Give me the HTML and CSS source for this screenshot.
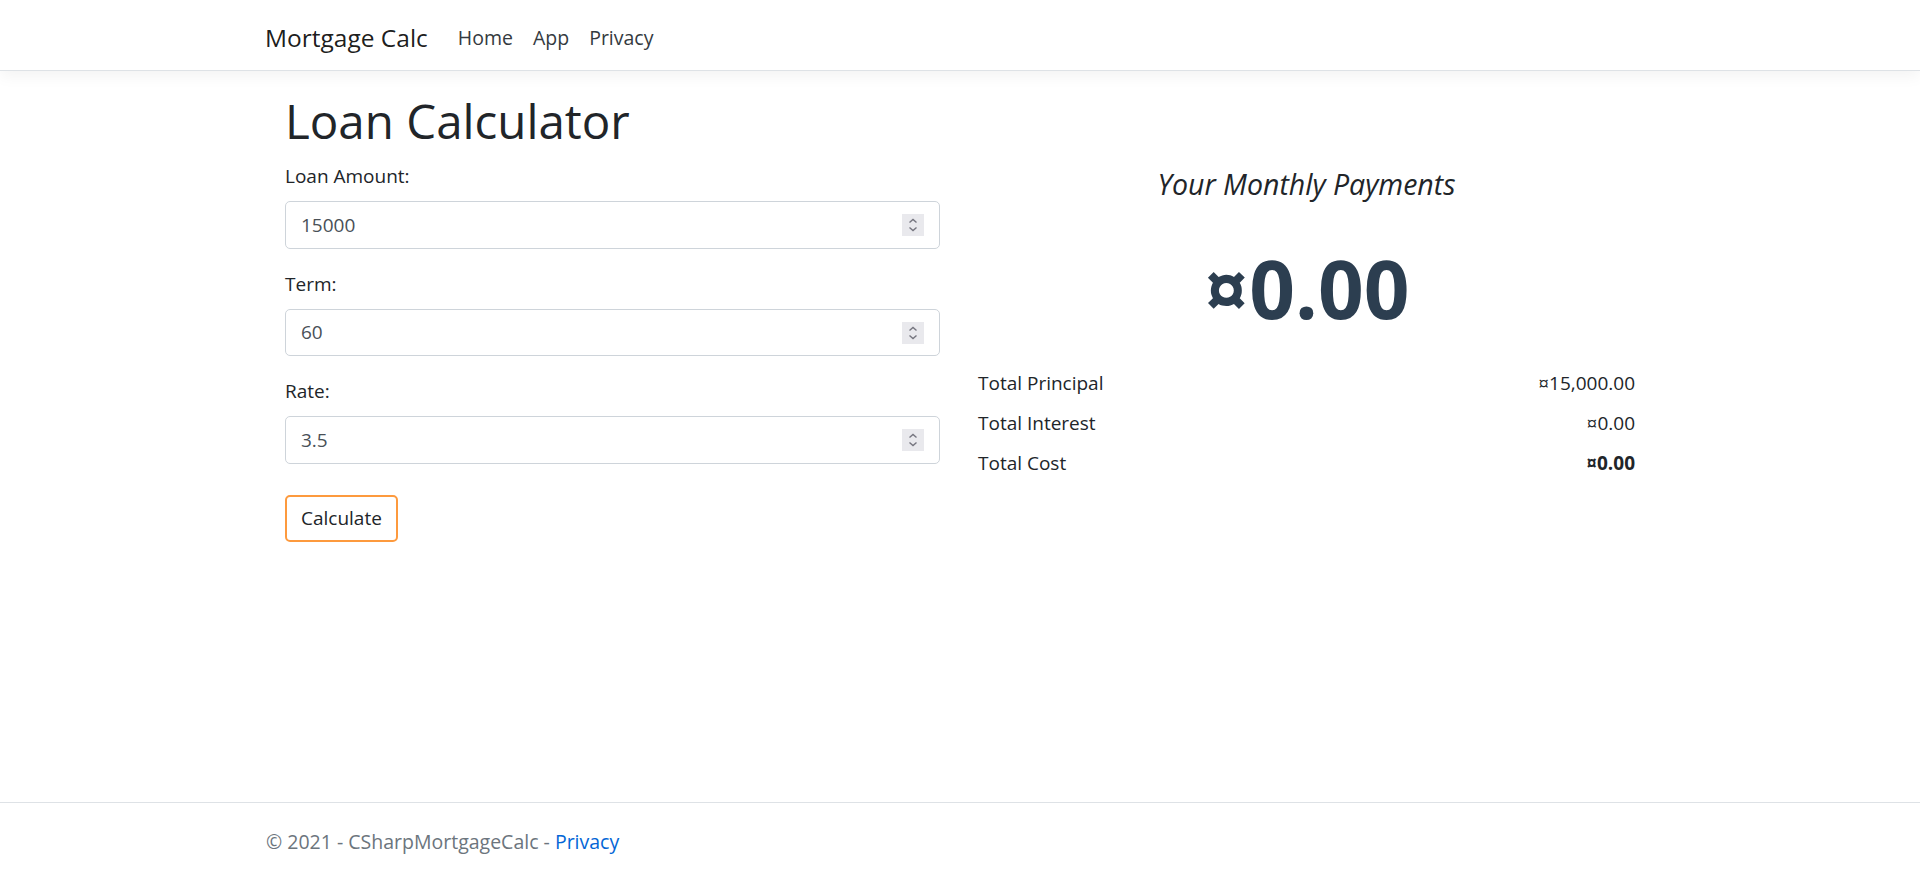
FILE: index.html
```html
<!DOCTYPE html>
<html lang="en">
<head>
<meta charset="utf-8">
<title>Loan Calculator - Mortgage Calc</title>
<link rel="stylesheet" href="styles.css">
</head>
<body>
<header>
  <nav class="navbar">
    <div class="container nav-inner">
      <a class="brand" href="#">Mortgage Calc</a>
      <ul class="nav-links">
        <li><a href="#">Home</a></li>
        <li><a href="#">App</a></li>
        <li><a href="#">Privacy</a></li>
      </ul>
    </div>
  </nav>
</header>
<div class="container">
  <main class="main">
    <h1 class="title">Loan Calculator</h1>
    <div class="calc-row">
      <form class="calc-form">
        <div class="field">
          <label for="amount">Loan Amount:</label>
          <div class="input-wrap">
            <input id="amount" class="control" type="number" value="15000">
            <span class="spin"><svg viewBox="0 0 22 22" width="22" height="22"><rect width="22" height="22" fill="#e9e9ed"/><path d="M7.5 8.5 L11 5.5 L14.5 8.5" fill="none" stroke="#75757f" stroke-width="1.4"/><path d="M7.5 13.5 L11 16.5 L14.5 13.5" fill="none" stroke="#75757f" stroke-width="1.4"/></svg></span>
          </div>
        </div>
        <div class="field">
          <label for="term">Term:</label>
          <div class="input-wrap">
            <input id="term" class="control" type="number" value="60">
            <span class="spin"><svg viewBox="0 0 22 22" width="22" height="22"><rect width="22" height="22" fill="#e9e9ed"/><path d="M7.5 8.5 L11 5.5 L14.5 8.5" fill="none" stroke="#75757f" stroke-width="1.4"/><path d="M7.5 13.5 L11 16.5 L14.5 13.5" fill="none" stroke="#75757f" stroke-width="1.4"/></svg></span>
          </div>
        </div>
        <div class="field">
          <label for="rate">Rate:</label>
          <div class="input-wrap">
            <input id="rate" class="control" type="number" value="3.5">
            <span class="spin"><svg viewBox="0 0 22 22" width="22" height="22"><rect width="22" height="22" fill="#e9e9ed"/><path d="M7.5 8.5 L11 5.5 L14.5 8.5" fill="none" stroke="#75757f" stroke-width="1.4"/><path d="M7.5 13.5 L11 16.5 L14.5 13.5" fill="none" stroke="#75757f" stroke-width="1.4"/></svg></span>
          </div>
        </div>
        <button type="button" class="btn-calc">Calculate</button>
      </form>
      <section class="results">
        <h4 class="results-heading">Your Monthly Payments</h4>
        <div class="monthly">¤0.00</div>
        <table class="totals">
          <tr><td>Total Principal</td><td class="num">¤15,000.00</td></tr>
          <tr><td>Total Interest</td><td class="num">¤0.00</td></tr>
          <tr><td>Total Cost</td><td class="num strong">¤0.00</td></tr>
        </table>
      </section>
    </div>
  </main>
</div>
<footer class="footer">
  <div class="container footer-inner">© 2021 - CSharpMortgageCalc - <a href="#">Privacy</a></div>
</footer>
</body>
</html>
```

FILE: styles.css
```css
html {
  font-size: 19px;
}

body {
  margin: 0;
  font-family: "Open Sans", "Noto Sans", sans-serif;
  font-size: 19px;
  line-height: 30px;
  color: #212529;
  background: #fff;
  min-height: 100vh;
  display: flex;
  flex-direction: column;
}

.container {
  width: 1425px;
  margin: 0 auto;
  padding: 0 15px;
  box-sizing: border-box;
}

.navbar {
  background: #fff;
  border-bottom: 1px solid #dee2e6;
  box-shadow: 0 5px 15px rgba(0, 0, 0, 0.05);
  padding: 12.5px 0 7.5px;
  margin-bottom: 20px;
}

.nav-inner {
  display: flex;
  align-items: center;
  padding-left: 17.5px;
}

.brand {
  font-size: 24.5px;
  line-height: 37px;
  padding: 6px 0;
  margin-right: 20px;
  color: rgba(0, 0, 0, 0.9);
  text-decoration: none;
}

.nav-links {
  display: flex;
  list-style: none;
  margin: 0;
  padding: 0;
}

.nav-links a {
  display: block;
  padding: 10px;
  font-size: 19.5px;
  color: #343a40;
  text-decoration: none;
}

.main {
  padding: 0 22.5px 15px;
}

.title {
  font-size: 47.5px;
  font-weight: 400;
  line-height: 60px;
  margin: 0 0 10px;
}

.calc-row {
  display: grid;
  grid-template-columns: 655px 1fr;
  column-gap: 38px;
}

.field {
  margin-bottom: 20px;
}

.field label {
  display: block;
  margin-bottom: 10px;
}

.input-wrap {
  position: relative;
}

.control {
  display: block;
  width: 100%;
  box-sizing: border-box;
  height: 47.5px;
  padding: 7.5px 15px;
  font: inherit;
  color: #495057;
  background: #fff;
  border: 1px solid #ced4da;
  border-radius: 5px;
  -moz-appearance: textfield;
  appearance: textfield;
  outline: none;
}

.control::-webkit-inner-spin-button,
.control::-webkit-outer-spin-button {
  -webkit-appearance: none;
  margin: 0;
}

.spin {
  position: absolute;
  right: 16px;
  top: 13px;
  width: 22px;
  height: 22px;
  display: block;
}

.spin svg {
  display: block;
}

.btn-calc {
  margin-top: 11px;
  font: inherit;
  line-height: 30px;
  padding: 6.5px 14px;
  background: #fff;
  color: #212529;
  border: 2px solid #fd9a3e;
  border-radius: 5px;
}

.results-heading {
  font-size: 28.5px;
  font-style: italic;
  font-weight: 400;
  line-height: 36px;
  text-align: center;
  margin: 4.5px 0 0;
}

.monthly {
  font-size: 80px;
  font-weight: 700;
  line-height: 100px;
  color: #2c3e50;
  text-align: center;
  margin-top: 36.5px;
}

.totals {
  width: 100%;
  border-collapse: collapse;
  margin-top: 24.5px;
}

.totals td {
  padding: 5px 0;
  line-height: 30px;
}

.totals .num {
  text-align: right;
}

.totals .strong {
  font-weight: 700;
}

.footer {
  margin-top: auto;
  border-top: 1px solid #dee2e6;
  padding-top: 2px;
  line-height: 73px;
  color: #6c757d;
  white-space: nowrap;
  font-size: 19.5px;
}

.footer-inner {
  padding-left: 18.5px;
}

.footer a {
  color: #0366d6;
  text-decoration: none;
}
```
